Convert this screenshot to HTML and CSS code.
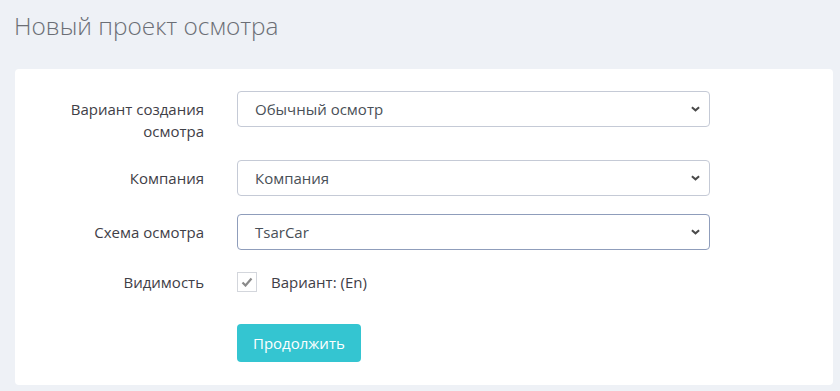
FILE: index.html
```html
<!DOCTYPE html>
<html lang="ru">
<head>
  <meta charset="UTF-8">
  <title>Новый проект осмотра</title>
  <link rel="stylesheet" href="styles.css">
</head>
<body>
  <h1 class="page-title">Новый проект осмотра</h1>

  <div class="card">
    <form class="form">
      <div class="row row-tall">
        <label class="label">Вариант создания осмотра</label>
        <div class="select">
          <span class="select-text">Обычный осмотр</span>
          <svg class="chevron" viewBox="0 0 10 6"><path d="M1 1l4 3.5L9 1"/></svg>
        </div>
      </div>

      <div class="row">
        <label class="label">Компания</label>
        <div class="select">
          <span class="select-text">Компания</span>
          <svg class="chevron" viewBox="0 0 10 6"><path d="M1 1l4 3.5L9 1"/></svg>
        </div>
      </div>

      <div class="row">
        <label class="label">Схема осмотра</label>
        <div class="select select-focus">
          <span class="select-text">TsarCar</span>
          <svg class="chevron" viewBox="0 0 10 6"><path d="M1 1l4 3.5L9 1"/></svg>
        </div>
      </div>

      <div class="row row-check">
        <label class="label">Видимость</label>
        <div class="check">
          <span class="check-box">
            <svg viewBox="0 0 12 10"><path d="M1.5 5.5l3 3 6-7"/></svg>
          </span>
          <span class="check-text">Вариант: (En)</span>
        </div>
      </div>

      <div class="row row-actions">
        <span class="label"></span>
        <button type="button" class="btn">Продолжить</button>
      </div>
    </form>
  </div>
</body>
</html>
```

FILE: styles.css
```css
body {
  margin: 0;
  background: #eef1f6;
  font-family: "Open Sans", "Liberation Sans", sans-serif;
  font-size: 15px;
  color: #3f4047;
}
.page-title {
  margin: 0;
  padding: 8px 14px 0;
  font-size: 24.4px;
  font-weight: 300;
  line-height: 36px;
  color: #6b6e75;
}
.card {
  margin: 25px 7px 0 15px;
  background: #fff;
  border-radius: 4px;
  padding: 22px 0 23px;
}
.row {
  display: flex;
  align-items: center;
  margin-bottom: 18px;
}
.row-tall {
  align-items: flex-start;
}
.label {
  width: 189px;
  flex: none;
  margin-right: 33px;
  text-align: right;
  line-height: 22px;
  color: #3f4047;
}
.row-tall .label {
  padding-top: 7px;
}
.select {
  width: 473px;
  height: 36px;
  box-sizing: border-box;
  border: 1px solid #c5cad6;
  border-radius: 4px;
  display: flex;
  align-items: center;
  justify-content: space-between;
  padding: 0 9px 0 17px;
  color: #495057;
}
.select-focus {
  border-color: #8f9dbb;
}
.chevron {
  width: 9px;
  height: 6px;
  fill: none;
  stroke: #4a4a4a;
  stroke-width: 2.2;
}
.row-check {
  height: 27px;
  margin-top: 4px;
  margin-bottom: 29px;
}
.check {
  display: flex;
  align-items: center;
}
.check-box {
  width: 20px;
  height: 20px;
  box-sizing: border-box;
  border: 1px solid #d3d6dc;
  display: flex;
  align-items: center;
  justify-content: center;
  margin-right: 14px;
}
.check-box svg {
  width: 12px;
  height: 10px;
  fill: none;
  stroke: #8a8a8a;
  stroke-width: 2.2;
}
.check-text {
  color: #3f4047;
}
.row-actions {
  margin-bottom: 0;
}
.btn {
  height: 38px;
  padding: 0 16px;
  border: 0;
  border-radius: 4px;
  background: #34c5d1;
  color: #fff;
  font-family: inherit;
  font-size: 15px;
  font-weight: 500;
}
```
